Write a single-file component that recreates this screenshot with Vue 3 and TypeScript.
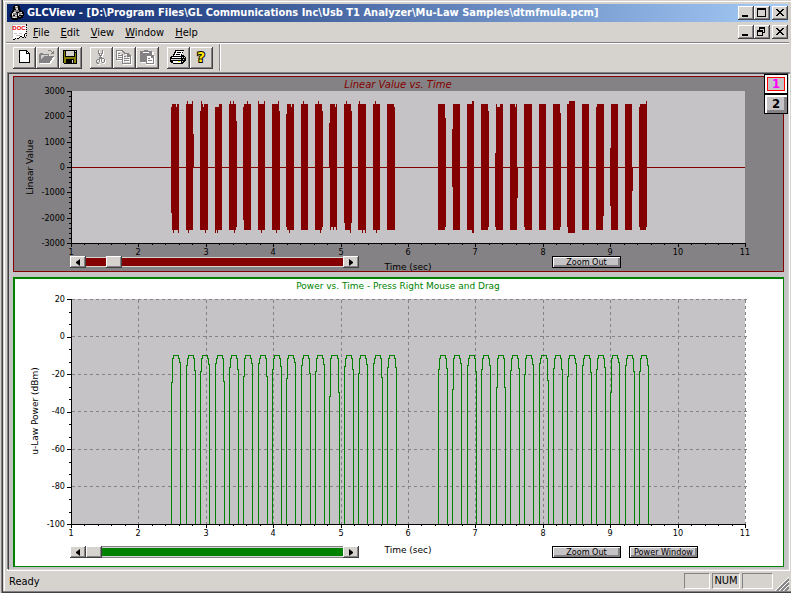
<script setup lang="ts">
import { ref } from 'vue'

type Tick = { at: number; size: number }
type Label = { at: number; text: string }
type Box = [x: number, width: number, top: number, bottom: number]
type Pulse = [left: number, right: number, leftKnee: number, rightKnee: number]

const LEFT = 71
const RIGHT = 745
const FLOOR = 524

function xOf(seconds: number): number {
  return Math.round(LEFT + ((seconds - 1) * (RIGHT - LEFT)) / 10)
}

function ticks(start: number, end: number, majors: number, minors: number, long: number, short: number): Tick[] {
  const count = majors * minors
  return Array.from({ length: count + 1 }, (_, i) => ({
    at: Math.round(start + ((end - start) * i) / count),
    size: i % minors === 0 ? long : short,
  }))
}

const seconds: Label[] = Array.from({ length: 11 }, (_, i) => ({ at: xOf(i + 1), text: String(i + 1) }))
const timeTicks = ticks(LEFT, RIGHT, 10, 5, 4, 2)
const linearTicks = ticks(91, 243, 6, 5, 4, 2)
const powerTicks = ticks(299, FLOOR, 6, 3, 4, 2)
const linearLabels: Label[] = [3000, 2000, 1000, 0, -1000, -2000, -3000].map((v, i) => ({
  at: Math.round(91 + (152 * i) / 6),
  text: String(v),
}))
const powerLabels: Label[] = [20, 0, -20, -40, -60, -80, -100].map((v, i) => ({
  at: Math.floor(299 + (225 * i) / 6),
  text: String(v),
}))

/* Tone bursts: body rectangles followed by the single-column peaks around them. */
const bursts: Box[] = [
  [172, 7, 104, 230], [186, 7, 104, 230], [201, 7, 104, 230], [215, 7, 107, 230], [229, 7, 104, 230],
  [244, 7, 104, 230], [258, 7, 104, 230], [272, 7, 104, 230], [287, 7, 104, 230], [301, 7, 104, 230],
  [315, 7, 104, 230], [330, 7, 104, 227], [345, 6, 104, 230], [358, 8, 104, 230], [373, 7, 104, 230],
  [387, 7, 104, 230], [438, 7, 104, 230], [453, 7, 104, 230], [467, 7, 104, 230], [481, 7, 104, 230],
  [496, 7, 107, 230], [510, 7, 104, 230], [525, 7, 104, 230], [539, 7, 104, 230], [553, 7, 104, 230],
  [568, 7, 104, 233], [582, 7, 104, 230], [597, 6, 104, 230], [611, 7, 104, 230], [625, 7, 104, 230],
  [640, 6, 104, 230],
]
const peaks: Box[] = [
  [171, 1, 107, 213], [173, 1, 230, 233], [178, 1, 230, 233], [187, 1, 101, 104], [192, 1, 101, 104],
  [193, 1, 134, 167], [188, 1, 230, 233], [200, 1, 111, 230], [201, 1, 101, 104], [205, 1, 230, 233],
  [219, 3, 104, 107], [215, 1, 230, 233], [217, 1, 230, 233], [230, 1, 101, 104], [233, 1, 101, 104],
  [236, 1, 121, 227], [234, 1, 230, 233], [243, 1, 107, 220], [247, 1, 101, 104], [258, 1, 101, 104],
  [264, 1, 101, 104], [261, 1, 230, 233], [278, 1, 101, 104], [279, 1, 111, 230], [276, 1, 230, 233],
  [286, 1, 114, 227], [289, 1, 230, 233], [303, 1, 101, 104], [318, 1, 101, 104], [322, 1, 111, 227],
  [320, 1, 230, 233], [329, 1, 123, 167], [330, 1, 227, 230], [333, 1, 227, 230], [336, 1, 227, 230],
  [344, 1, 104, 223], [346, 1, 101, 104], [351, 1, 111, 223], [350, 1, 230, 233], [359, 1, 101, 104],
  [362, 1, 230, 233], [365, 1, 230, 233], [375, 1, 101, 104], [376, 1, 230, 233], [394, 1, 107, 230],
  [445, 1, 118, 227], [452, 1, 129, 187], [472, 2, 101, 104], [472, 2, 230, 233], [488, 1, 111, 227],
  [495, 1, 153, 227], [496, 1, 104, 107], [500, 3, 104, 107], [517, 1, 167, 198], [524, 1, 104, 227],
  [560, 1, 113, 227], [567, 1, 104, 227], [569, 6, 101, 104], [596, 1, 107, 230], [603, 1, 104, 216],
  [610, 1, 148, 206], [632, 1, 167, 191], [639, 1, 107, 227], [646, 1, 101, 227],
]
const notches: Box[] = [
  [176, 1, 104, 107], [203, 1, 104, 107], [291, 1, 104, 107], [335, 1, 104, 107], [515, 1, 104, 107],
]

const pulses: Pulse[] = [
  [171, 180, 382, 362], [186, 195, 365, 370], [200, 209, 371, 364], [215, 224, 363, 381],
  [229, 238, 367, 369], [243, 252, 376, 363], [258, 267, 363, 376], [272, 281, 369, 366],
  [286, 295, 378, 362], [301, 310, 365, 373], [315, 324, 371, 364], [329, 339, 396, 392],
  [344, 353, 366, 369], [358, 367, 373, 364], [373, 382, 363, 377], [387, 396, 367, 367],
  [438, 447, 369, 368], [452, 461, 389, 363], [467, 476, 365, 371], [481, 490, 369, 365],
  [496, 505, 387, 387], [510, 519, 370, 368], [524, 533, 374, 364], [539, 548, 363, 380],
  [553, 562, 368, 369], [567, 576, 376, 363], [582, 591, 365, 372], [596, 605, 369, 367],
  [610, 619, 392, 362], [625, 634, 365, 371], [639, 648, 371, 365],
]

function pulsePath([l, r, kl, kr]: Pulse): string {
  return `M${l} ${FLOOR}V${kl}H${l + 1}V358H${l + 2}V355H${r - 2}V358H${r - 1}V${kr}H${r}V${FLOOR}`
}
const powerPath = pulses.map(pulsePath).join('')

const menus = ['File', 'Edit', 'View', 'Window', 'Help']
const page = ref(1)
const linearScroll = ref(20)
const powerScroll = ref(0)
</script>

<template>
  <div class="desktop">
    <div class="window">
      <header class="titlebar">
        <svg class="icon" viewBox="0 0 16 16" shape-rendering="crispEdges" aria-hidden="true">
          <path fill="#000" d="M5 0h5v1h1v3h1v2h2v1h1v4h-1v2h-2v1H9v1H3v-1H2v-2H1V9h1V7h1V5h1V1h1z" />
          <path fill="#848284" d="M6 1h3v3H6zM5 5h5v2H5zM10 7h3v3h-3zM4 8h4v2H4zM3 11h5v2H3zM10 11h2v1h-2z" />
          <path fill="#d6d3ce" d="M6 1h2v1H6zM7 3h2v2H7zM4 7h3v1H4zM3 8h1v3H3zM9 8h1v3H9zM11 7h2v1h-2zM12 9h2v1h-2zM4 12h4v1H4zM6 10h2v1H6z" />
          <path fill="#fff" d="M7 1h1v1H7zM5 7h1v1H5zM3 9h1v1H3zM9 9h1v1H9zM5 12h1v1H5z" />
        </svg>
        <h1>GLCView - [D:\Program Files\GL Communications Inc\Usb T1 Analyzer\Mu-Law Samples\dtmfmula.pcm]</h1>
        <div class="controls">
          <button type="button" aria-label="Minimize"><svg viewBox="0 0 12 10" shape-rendering="crispEdges"><path d="M2 7h6v2H2z" /></svg></button>
          <button type="button" aria-label="Maximize"><svg viewBox="0 0 12 10" shape-rendering="crispEdges"><path fill-rule="evenodd" d="M1 0h9v9H1zM2 2v6h7V2z" /></svg></button>
          <button type="button" class="close" aria-label="Close"><svg viewBox="0 0 12 10" shape-rendering="crispEdges"><path d="M2 1h2v1h1v1h2V2h1V1h2v1H9v1H8v1H7v1h1v1h1v1h1v1H8V7H7V6H5v1H4v1H2V7h1V6h1V5h1V4H4V3H3V2H2z" /></svg></button>
        </div>
      </header>

      <nav class="menubar" aria-label="Menu">
        <svg class="icon" viewBox="0 0 16 16" aria-hidden="true">
          <path fill="#fff" d="M1 0h14v11l-2 3-3-1-3 2-2-1-3 1-1-1z" />
          <g shape-rendering="crispEdges">
            <path fill="#c6c3c6" d="M1 0h14v1H1zM1 1h1v13H1z" />
            <path fill="#000" d="M15 0h1v2h-1zM15 3h1v1h-1zM15 5h1v1h-1zM15 7h1v1h-1zM14 9h2v1h-2zM13 10h1v3h-1zM15 11h1v1h-1zM14 13h1v1h-1zM11 13h2v1h-2zM9 12h2v1H9zM8 13h1v1H8zM6 14h2v1H6zM4 14h1v1H4zM2 15h2v1H2z" />
            <path fill="#c6c3c6" d="M3 9h3v1H3zM8 9h3v1H8zM5 11h4v1H5z" />
          </g>
          <text x="8" y="6" text-anchor="middle" class="doc">DOC</text>
        </svg>
        <button v-for="m in menus" :key="m" type="button" class="menu"><u>{{ m[0] }}</u>{{ m.slice(1) }}</button>
        <div class="controls">
          <button type="button" aria-label="Minimize document"><svg viewBox="0 0 12 10" shape-rendering="crispEdges"><path d="M2 7h6v2H2z" /></svg></button>
          <button type="button" aria-label="Restore document"><svg viewBox="0 0 12 10" shape-rendering="crispEdges"><path fill-rule="evenodd" d="M3 0h6v6H7v3H1V3h2zM4 2v1h3v2h1V2zM2 5v3h4V5z" /></svg></button>
          <button type="button" class="close" aria-label="Close document"><svg viewBox="0 0 12 10" shape-rendering="crispEdges"><path d="M2 1h2v1h1v1h2V2h1V1h2v1H9v1H8v1H7v1h1v1h1v1h1v1H8V7H7V6H5v1H4v1H2V7h1V6h1V5h1V4H4V3H3V2H2z" /></svg></button>
        </div>
      </nav>

      <div class="toolbar" role="toolbar" aria-label="Standard">
        <div class="tools">
          <button type="button" aria-label="New">
            <svg viewBox="0 0 16 16" shape-rendering="crispEdges"><path d="M3 1h8v1h1v1h1v1h1v10H3z" /><path fill="#fff" d="M4 2h6v3h3v8H4zM11 3h1v1h-1z" /></svg>
          </button>
          <button type="button" aria-label="Open" disabled>
            <svg viewBox="0 0 16 16" shape-rendering="crispEdges"><path fill="#fff" transform="translate(1 1)" d="M0 5h1V4h3v1h6v2h5l-4 7H0z" /><path fill="#848284" d="M1 4h3v1h6v2h5v1h-1v1h-1v2h-1v1h-1v2H0V5h1zM9 1h3v1h1v1h1V2h1v3h-3V4h1V3h-1V2H9z" /><path fill="#fff" d="M2 6h7v1H5v1H4v1H3v1H2z" opacity=".6" /></svg>
          </button>
          <button type="button" aria-label="Save">
            <svg viewBox="0 0 16 16" shape-rendering="crispEdges"><path d="M1 1h14v14H2v-1H1z" /><path fill="#848200" d="M2 2h1v6h10V4h1v10h-2v-4H4v4H2z" /><path fill="#d6d3ce" d="M4 2h8v5H4zM13 2h1v1h-1zM10 11h1v3h-1z" /></svg>
          </button>
        </div>
        <div class="tools">
          <button type="button" aria-label="Cut" disabled>
            <svg viewBox="0 0 16 16" shape-rendering="crispEdges"><g v-for="(c, i) in ['#fff', '#848284']" :key="c" :fill="c" :transform="i ? '' : 'translate(1 1)'"><path d="M5 1h1v3h1v2h1v2h1v1h2v1h1v3h-1v1H9v-1H8v-3H7v3H6v2H4v-1H3v-3h1v-1h2V8h1V7H6V5H5zM9 1h1v4H9v2H8V4h1zM4 11v2h1v1h1v-3zM9 10v3h2v-3z" fill-rule="evenodd" /></g></svg>
          </button>
          <button type="button" aria-label="Copy" disabled>
            <svg viewBox="0 0 16 16" shape-rendering="crispEdges"><g v-for="(c, i) in ['#fff', '#848284']" :key="c" :fill="c" :transform="i ? '' : 'translate(1 1)'"><path fill-rule="evenodd" d="M0 1h6l3 3h3l3 3v8H6v-4H0zM1 2v8h5V5h2L5 2zM2 4h2v1H2zM2 6h4v1H2zM2 8h4v1H2zM7 5v9h7V8h-3V5zM8 7h2v1H8zM8 9h5v1H8zM8 11h5v1H8z" /></g></svg>
          </button>
          <button type="button" aria-label="Paste" disabled>
            <svg viewBox="0 0 16 16" shape-rendering="crispEdges"><path fill="#fff" d="M2 3h13v4h1v9H7v-2H2z" /><path fill="#848284" d="M1 2h4V1h4v1h4v4h1l1 1v8H7v-2H1z" /><path fill="#fff" d="M4 3h6v1H4zM8 7h4v2h2v5H8z" /><path fill="#848284" d="M9 9h2v1H9zM9 11h4v1H9z" /></svg>
          </button>
        </div>
        <div class="tools">
          <button type="button" aria-label="Print">
            <svg viewBox="0 0 16 16" shape-rendering="crispEdges"><path d="M5 1h9v1h-1v2h-1v2h2v1h1v1h1v4h-1v1h-1v1h-1v1H3v-1H1v-1H0V8h1V7h2V5h1V3h1z" /><path fill="#fff" d="M6 2h7v1h-1v2h-1v2H4V6h1V4h1zM2 8h9v1H2zM3 12h8v2H3z" /><path d="M7 3h4v1H7zM6 5h4v1H6z" /><path fill="#d6d3ce" d="M1 10h10v1H1zM12 8h1v1h-1zM13 10h1v1h-1zM12 12h1v1h-1zM14 8h1v1h-1z" /><path fill="#efe700" d="M8 12h2v1H8z" /></svg>
          </button>
          <button type="button" aria-label="About">
            <svg viewBox="0 0 16 16"><text x="8" y="13" text-anchor="middle" class="mark">?</text></svg>
          </button>
        </div>
      </div>

      <main class="client">
        <div class="pages">
          <button v-for="n in 2" :key="n" type="button" :class="{ active: page === n }" :aria-pressed="page === n" @click="page = n">{{ n }}</button>
        </div>

        <section class="panel linear">
          <svg class="chart" viewBox="14 77 769 179" role="img" aria-label="Linear Value vs. Time">
            <text x="398" y="88" text-anchor="middle" class="heading">Linear Value vs. Time</text>
            <g shape-rendering="crispEdges">
              <rect x="72" y="91" width="673" height="152" class="plot" />
              <rect x="71" y="91" width="1" height="153" />
              <rect x="71" y="243" width="675" height="1" />
              <rect v-for="t in linearTicks" :key="'y' + t.at" :x="71 - t.size" :y="t.at" :width="t.size" height="1" />
              <rect v-for="t in timeTicks" :key="'x' + t.at" :x="t.at" y="243" width="1" :height="t.size" />
              <g class="trace">
                <rect x="72" y="167" width="673" height="1" />
                <rect v-for="(b, i) in bursts" :key="'b' + i" :x="b[0]" :y="b[2]" :width="b[1]" :height="b[3] - b[2]" />
                <rect v-for="(b, i) in peaks" :key="'p' + i" :x="b[0]" :y="b[2]" :width="b[1]" :height="b[3] - b[2]" />
              </g>
              <rect v-for="(b, i) in notches" :key="'n' + i" :x="b[0]" :y="b[2]" :width="b[1]" :height="b[3] - b[2]" class="plot" />
            </g>
            <text v-for="l in linearLabels" :key="l.text" x="65" :y="l.at + 3" text-anchor="end">{{ l.text }}</text>
            <text v-for="l in seconds" :key="l.text" :x="l.at" y="255" text-anchor="middle">{{ l.text }}</text>
            <text transform="translate(33 167) rotate(-90)" text-anchor="middle" class="name">Linear Value</text>
          </svg>
          <div class="foot">
            <div class="scroll">
              <button type="button" aria-label="Scroll left"><svg viewBox="0 0 4 7"><path d="M4 0v7L0 4V3z" /></svg></button>
              <input v-model.number="linearScroll" type="range" min="0" max="241" aria-label="Linear time position" />
              <button type="button" aria-label="Scroll right"><svg viewBox="0 0 4 7"><path d="M0 0v7l4-3V3z" /></svg></button>
            </div>
            <span class="axis">Time (sec)</span>
            <div class="actions"><button type="button">Zoom Out</button></div>
          </div>
        </section>

        <section class="panel power">
          <svg class="chart" viewBox="15 279 768 267" role="img" aria-label="Power vs. Time">
            <text x="398" y="289" text-anchor="middle" class="heading">Power vs. Time - Press Right Mouse and Drag</text>
            <g shape-rendering="crispEdges">
              <rect x="72" y="299" width="673" height="225" class="plot" />
              <g transform="translate(.5 .5)">
                <g class="grid">
                  <path v-for="l in powerLabels.slice(0, 6)" :key="'h' + l.at" :d="`M71 ${l.at}H746`" />
                  <path v-for="l in seconds.slice(1)" :key="'v' + l.at" :d="`M${l.at} 299V524`" />
                </g>
                <path class="curve" :d="powerPath" />
              </g>
              <rect x="71" y="299" width="1" height="226" />
              <rect x="71" y="524" width="675" height="1" />
              <rect v-for="t in powerTicks" :key="'y' + t.at" :x="71 - t.size" :y="t.at" :width="t.size" height="1" />
              <rect v-for="t in timeTicks" :key="'x' + t.at" :x="t.at" y="524" width="1" :height="t.size" />
            </g>
            <text v-for="l in powerLabels" :key="l.text" x="65" :y="l.at + 3" text-anchor="end">{{ l.text }}</text>
            <text v-for="l in seconds" :key="l.text" :x="l.at" y="536" text-anchor="middle">{{ l.text }}</text>
            <text transform="translate(38 411) rotate(-90)" text-anchor="middle" class="name">u-Law Power (dBm)</text>
          </svg>
          <div class="foot">
            <div class="scroll">
              <button type="button" aria-label="Scroll left"><svg viewBox="0 0 4 7"><path d="M4 0v7L0 4V3z" /></svg></button>
              <input v-model.number="powerScroll" type="range" min="0" max="241" aria-label="Power time position" />
              <button type="button" aria-label="Scroll right"><svg viewBox="0 0 4 7"><path d="M0 0v7l4-3V3z" /></svg></button>
            </div>
            <span class="axis">Time (sec)</span>
            <div class="actions"><button type="button">Zoom Out</button><button type="button">Power Window</button></div>
          </div>
        </section>
      </main>

      <footer class="status">
        <span class="ready">Ready</span>
        <span class="cell narrow"></span>
        <span class="cell">NUM</span>
        <span class="cell wide"></span>
        <svg class="grip" viewBox="0 0 14 14" aria-hidden="true">
          <path d="M2 14L14 2M6 14L14 6M10 14L14 10" stroke="#848284" stroke-width="2" />
          <path d="M0 14L14 0M4 14L14 4M8 14L14 8" stroke="#fff" />
        </svg>
      </footer>
    </div>
  </div>
</template>

<style>
body {
  margin: 0;
  background: #d6d3ce;
}
</style>

<style scoped>
* {
  box-sizing: border-box;
}
.desktop {
  display: flex;
  min-height: 100vh;
  padding-left: 3px;
  background: linear-gradient(90deg, #d6d3ce 1px, #848284 1px, #848284 2px, #424142 2px, #424142 3px, #d6d3ce 3px);
  font-family: "DejaVu Sans Condensed", "DejaVu Sans", sans-serif;
  font-size: 11px;
  color: #000;
}
.window {
  flex: 1;
  min-width: 0;
  display: flex;
  flex-direction: column;
  padding: 2px 2px 1px 3px;
  border-bottom: 1px solid #424142;
  box-shadow: inset 0 -1px #848284, inset 0 1px #d6d3ce, inset 0 2px #fff, inset 1px 0 #d6d3ce, inset 2px 0 #fff;
}
button {
  padding: 0;
  font: inherit;
  color: inherit;
  border: 0;
  background: #d6d3ce;
}
.icon {
  width: 16px;
  height: 16px;
  flex: none;
}
.titlebar {
  display: flex;
  align-items: center;
  height: 18px;
  margin: 2px 1px 0 1px;
  padding-left: 2px;
  background: linear-gradient(90deg, #08246b, #a5cbf7);
}
h1 {
  flex: 1;
  min-width: 0;
  margin: 0 0 0 2px;
  overflow: hidden;
  white-space: nowrap;
  font-size: 11px;
  line-height: 18px;
  color: #fff;
}
.controls {
  display: flex;
  margin-left: auto;
}
.controls button {
  display: flex;
  width: 16px;
  height: 14px;
  padding: 2px;
  box-shadow: inset -1px -1px #424142, inset 1px 1px #fff, inset -2px -2px #848284;
}
.controls svg {
  width: 12px;
  height: 10px;
}
.controls .close {
  margin-left: 2px;
}
.menubar {
  display: flex;
  align-items: center;
  height: 21px;
  padding: 0 1px 0 5px;
  border-bottom: 1px solid #848284;
}
.menu {
  height: 18px;
  padding: 0 5px 0 6px;
}
.doc {
  font: bold 6px "Liberation Sans", sans-serif;
  fill: #e70000;
}
.toolbar {
  display: flex;
  gap: 8px;
  height: 29px;
  padding: 3px 0 4px 7px;
  border-top: 1px solid #fff;
}
.tools {
  display: flex;
}
.tools:last-child {
  padding-right: 6px;
  position: relative;
}
.tools:last-child::after {
  content: "";
  position: absolute;
  top: -3px;
  bottom: -3px;
  right: -2px;
  width: 2px;
  background: linear-gradient(90deg, #848284 1px, #fff 1px);
}
.tools button {
  width: 23px;
  height: 22px;
  padding: 2px 3px 4px;
  box-shadow: inset -1px -1px #424142, inset 1px 1px #fff, inset -2px -2px #848284;
}
.tools svg {
  display: block;
  width: 16px;
  height: 16px;
}
.mark {
  font: bold 14px "DejaVu Sans", sans-serif;
  fill: #ffe700;
  stroke: #000;
  stroke-width: 2px;
  paint-order: stroke;
}
.client {
  position: relative;
  flex: 1;
  display: flex;
  flex-direction: column;
  gap: 5px;
  padding: 2px 4px 2px;
  border-left: 1px solid #424142;
  border-top: 1px solid #424142;
  border-right: 1px solid #d6d3ce;
  border-bottom: 1px solid #d6d3ce;
  margin: 1px 0 1px 2px;
  box-shadow: -1px -1px #848284, 1px 1px #fff, 1px -1px #848284, -1px 1px #fff;
  background: #c6c3c6;
}
.pages {
  position: absolute;
  top: 0;
  right: 0;
  display: flex;
  flex-direction: column;
}
.pages button {
  width: 24px;
  height: 20px;
  border: 1px solid #000;
  background: #c6c3c6;
  box-shadow: inset 2px 2px #fff, inset -3px -3px #848284;
  font-weight: bold;
  font-size: 13px;
  line-height: 18px;
}
.pages .active {
  color: #f0f;
  box-shadow: inset 0 0 0 2px #fff, inset 0 0 0 3px #f00;
}
.panel {
  display: flex;
  flex-direction: column;
}
.linear {
  --ink: #840000;
  border: 1px solid #840000;
  background: #848284;
}
.power {
  --ink: #008200;
  flex: 1;
  border: solid #008200;
  border-width: 2px 1px 1px 2px;
  background: #fff;
}
.chart {
  display: block;
  width: 100%;
  height: auto;
  font-size: 9px;
}
.heading,
.name,
.axis {
  font-family: "DejaVu Sans", sans-serif;
}
.heading {
  fill: var(--ink);
}
.linear .heading {
  font-size: 10px;
  font-style: italic;
}
.plot {
  fill: #c6c3c6;
}
.trace {
  fill: #840000;
}
.grid {
  stroke: #848284;
  stroke-dasharray: 3 3;
}
.curve {
  fill: none;
  stroke: #008200;
}
.foot {
  display: grid;
  grid-template-columns: 289px 98px 1fr;
  align-items: start;
  padding: 0 85px 0 56px;
  font-size: 9px;
  line-height: 12px;
}
.linear .foot {
  height: 15px;
}
.power .foot {
  height: 20px;
  padding-left: 55px;
}
.scroll {
  display: flex;
  height: 12px;
}
.scroll button {
  display: flex;
  align-items: center;
  justify-content: center;
  width: 16px;
  height: 12px;
  box-shadow: inset -1px -1px #424142, inset 1px 1px #fff, inset -2px -2px #848284;
}
.scroll svg {
  width: 4px;
  height: 7px;
}
.scroll input {
  flex: 1;
  min-width: 0;
  height: 12px;
  margin: 0;
  appearance: none;
  background: linear-gradient(#848284 1px, #d6d3ce 1px, #d6d3ce 2px, var(--ink) 2px, var(--ink) 10px, #d6d3ce 10px, #d6d3ce 11px, #848284 11px);
}
.scroll input::-webkit-slider-thumb {
  appearance: none;
  width: 16px;
  height: 12px;
  background: #d6d3ce;
  box-shadow: inset -1px -1px #424142, inset 1px 1px #fff, inset -2px -2px #848284;
}
.axis {
  text-align: center;
}
.power .axis {
  line-height: 8px;
}
.linear .axis {
  padding-top: 5px;
  height: 15px;
}
.actions {
  display: flex;
  gap: 8px;
  justify-self: end;
  min-width: 146px;
}
.actions button {
  width: 69px;
  height: 12px;
  border: 1px solid #000;
  background: #c6c3c6;
  box-shadow: inset 1px 1px #fff, inset -2px -2px #848284;
  line-height: 10px;
  white-space: nowrap;
}
.status {
  display: flex;
  align-items: center;
  gap: 2px;
  height: 20px;
  padding-left: 3px;
}
.ready {
  flex: 1;
}
.cell {
  width: 28px;
  height: 16px;
  border: 1px solid;
  border-color: #848284 #fff #fff #848284;
  text-align: center;
  line-height: 14px;
}
.cell.narrow {
  width: 26px;
}
.cell.wide {
  width: 31px;
}
.grip {
  width: 14px;
  height: 14px;
  align-self: end;
}
</style>
